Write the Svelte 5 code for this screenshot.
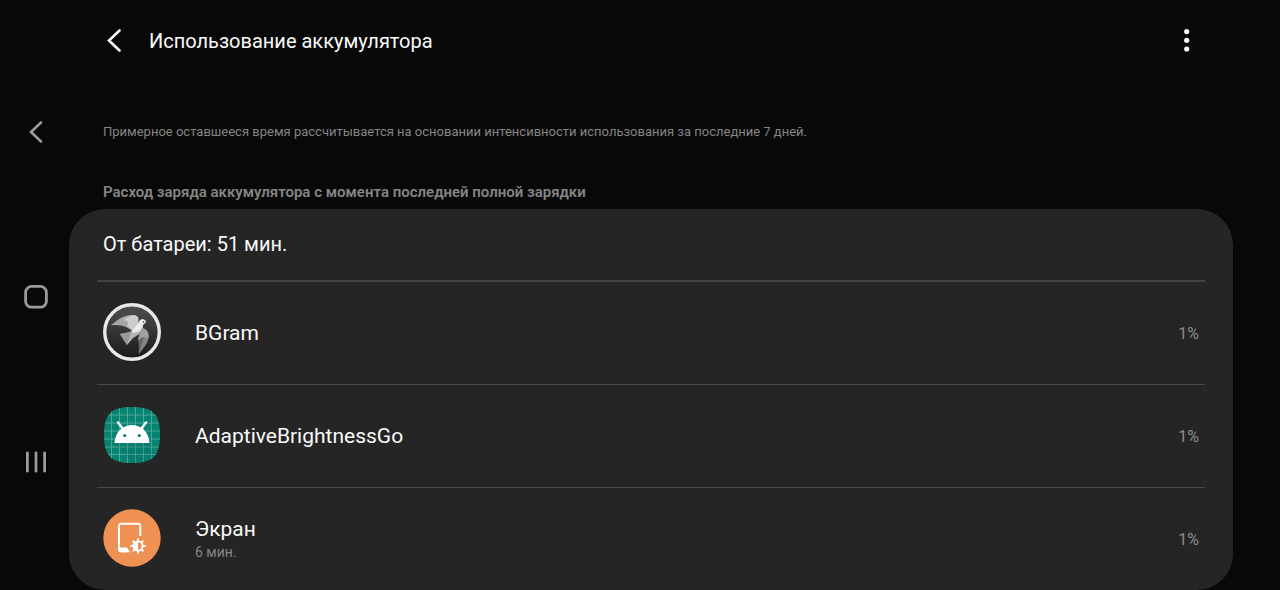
<script lang="ts">
    const apps = [
        { id: 'bgram', name: 'BGram', time: '', usage: 1 },
        { id: 'brightness', name: 'AdaptiveBrightnessGo', time: '', usage: 1 },
        { id: 'screen', name: 'Экран', time: '6 мин.', usage: 1 },
    ];
</script>

<style>
    :global(body) {
        margin: 0;
        background: #080808;
    }

    .screen {
        display: flex;
        min-height: 100vh;
        color: #fafafa;
        font-family: Roboto, "Noto Sans", sans-serif;
    }

    button {
        display: flex;
        align-items: center;
        justify-content: center;
        padding: 0;
        border: none;
        background: transparent;
        color: inherit;
        font: inherit;
        cursor: pointer;
    }

    svg {
        display: block;
    }

    .nav-bar {
        display: flex;
        flex-direction: column;
        justify-content: space-between;
        flex: none;
        width: 69px;
        box-sizing: border-box;
        padding: 108px 0 104px 12px;
        color: #9a9a9a;
    }

    .nav-bar button {
        width: 48px;
        height: 48px;
    }

    main {
        flex: 1;
        min-width: 0;
        margin-right: 47px;
    }

    header {
        display: flex;
        align-items: center;
        height: 82px;
        padding: 0 34px 0 33px;
    }

    header button {
        width: 24px;
        height: 48px;
    }

    h1 {
        flex: 1;
        margin: 0 0 0 23px;
        font-size: 20px;
        line-height: 32px;
        font-weight: 400;
    }

    .note {
        margin: 40px 34px 0;
        font-size: 13px;
        line-height: 20px;
        color: #858585;
    }

    h2 {
        margin: 40px 34px 7px;
        font-size: 15px;
        line-height: 20px;
        font-weight: 600;
        color: #858585;
    }

    .card {
        padding: 0 28px;
        border-radius: 36px;
        background: #252525;
    }

    .summary {
        margin: 0;
        padding: 0 6px;
        font-size: 20px;
        line-height: 71px;
    }

    ul {
        margin: 0;
        padding: 0;
        list-style: none;
    }

    li {
        border-top: 1px solid #484848;
    }

    li:first-child {
        border-top: 2px solid #434343;
    }

    .app {
        width: 100%;
        height: 102px;
        padding: 0 6px;
        text-align: left;
    }

    .app svg {
        margin-bottom: 2px;
    }

    .app-text {
        display: flex;
        flex-direction: column;
        flex: 1;
        margin-left: 34px;
    }

    .name {
        font-size: 21px;
        line-height: 26px;
    }

    .time {
        font-size: 14px;
        line-height: 20px;
        color: #858585;
    }

    .usage {
        font-size: 16px;
        color: #8c8c8c;
    }
</style>

<div class="screen">
    <nav class="nav-bar" aria-label="Навигация">
        <button aria-label="Назад">
            <svg width="24" height="24" viewBox="0 0 24 24" fill="none" stroke="currentColor" stroke-width="2.6" stroke-linecap="round">
                <path d="M17 2.5 7 12l10 9.5" />
            </svg>
        </button>
        <button aria-label="Главный экран">
            <svg width="24" height="24" viewBox="0 0 24 24" fill="none" stroke="currentColor" stroke-width="2.8">
                <rect x="1.6" y="1.4" width="20.8" height="20.8" rx="6" />
            </svg>
        </button>
        <button aria-label="Недавние приложения">
            <svg width="24" height="24" viewBox="0 0 24 24" stroke="currentColor" stroke-width="2.8" stroke-linecap="round">
                <path d="M3.4 2.8v18.4M12 2.8v18.4M20.6 2.8v18.4" />
            </svg>
        </button>
    </nav>

    <main>
        <header>
            <button aria-label="Назад">
                <svg width="24" height="24" viewBox="0 0 24 24" fill="none" stroke="currentColor" stroke-width="2.6" stroke-linecap="round">
                    <path d="M17.5 1.5 7 11.5l10.5 10" />
                </svg>
            </button>
            <h1>Использование аккумулятора</h1>
            <button aria-label="Дополнительно">
                <svg width="24" height="24" viewBox="0 0 24 24" fill="currentColor">
                    <circle cx="11.7" cy="2.6" r="2.6" />
                    <circle cx="11.7" cy="11.3" r="2.6" />
                    <circle cx="11.7" cy="20" r="2.6" />
                </svg>
            </button>
        </header>

        <p class="note">Примерное оставшееся время рассчитывается на основании интенсивности использования за последние 7 дней.</p>

        <h2>Расход заряда аккумулятора с момента последней полной зарядки</h2>
        <section class="card">
            <p class="summary">От батареи: 51 мин.</p>
            <ul>
                {#each apps as app (app.id)}
                    <li>
                        <button class="app">
                            {#if app.id === 'bgram'}
                                <svg width="58" height="58" viewBox="0 0 58 58">
                                    <defs>
                                        <linearGradient id="disc" x1="0" y1="0" x2="0" y2="1">
                                            <stop offset="0" stop-color="#505052" />
                                            <stop offset="1" stop-color="#19191a" />
                                        </linearGradient>
                                    </defs>
                                    <circle cx="29" cy="29" r="27.3" fill="url(#disc)" stroke="#e9e9e9" stroke-width="3.4" />
                                    <path d="M8 22C14 18 19 12 29 12c6 0 8 3 6 8l-5 8-7-4c-5-2-10-2-15-2z" fill="#a6a6a6" />
                                    <path d="M21 17c5-5 11-6 14-3v6l-6 7-5-4c2-3 1-5-3-6z" fill="#cdcdcd" />
                                    <path d="M17 31 27 29 36 19c2-4 6-3 7 0l-3 3c0 8-5 10-10 13l-6 7z" fill="#b4b4b4" />
                                    <path d="M29 27 36 19c2-4 6-3 7 0l-3 3c-1 6-5 7-10 8z" fill="#ebebeb" />
                                    <path d="M17 31 28 29l-4 13z" fill="#999" />
                                    <path d="M39 25c5 1 8 6 6 12-1 4-4 7-9 14 0-6 1-10-1-15z" fill="#858587" />
                                    <path d="M39 25c5 1 8 5 6 11l-4-2-6 2z" fill="#a0a0a0" />
                                    <path d="M35 37 41 34l-5 17c-1-4 1-9-1-14z" fill="#68686a" />
                                    <circle cx="40.5" cy="19" r=".8" fill="#333" />
                                </svg>
                            {:else if app.id === 'brightness'}
                                <svg width="58" height="58" viewBox="0 0 58 58">
                                    <defs>
                                        <clipPath id="tile">
                                            <path d="M29 1C50 1 57 8 57 29S50 57 29 57 1 50 1 29 8 1 29 1z" />
                                        </clipPath>
                                    </defs>
                                    <g clip-path="url(#tile)">
                                        <path d="M0 0h58v58H0z" fill="#078371" />
                                        <path d="M8.5 0v58M16.5 0v58M24.5 0v58M32.5 0v58M40.5 0v58M48.5 0v58M0 9h58M0 17h58M0 25h58M0 33h58M0 41h58M0 48.5h58" stroke="#55aa9d" stroke-width=".9" />
                                        <path d="M12 37h34l8 20H29z" fill="#056b5d" opacity=".2" />
                                    </g>
                                    <path d="m15 16.500 5 6.500M43 16.500l-5 6.500" stroke="#fff" stroke-width="2.4" stroke-linecap="round" />
                                    <path d="M11.5 37C13 13 45 13 46.500 37z" fill="#fff" />
                                    <circle cx="21.7" cy="29.5" r="1.6" fill="#078371" />
                                    <circle cx="36.3" cy="29.5" r="1.6" fill="#078371" />
                                </svg>
                            {:else}
                                <svg width="58" height="58" viewBox="0 0 58 58">
                                    <circle cx="29" cy="29" r="28.7" fill="#ef9153" />
                                    <path d="M37.3 27V17c0-1.5-1-2.3-2.3-2.3H18.3c-1.3 0-2.3.8-2.3 2.3v23c0 1.5 1 2.3 2.3 2.3H24" fill="none" stroke="#fff" stroke-width="2" />
                                    <path d="M16 38.500h8l3 4.800h-9c-1.400 0-2-.8-2-2z" fill="#fff" />
                                    <circle cx="35" cy="37" r="4.6" fill="none" stroke="#fff" stroke-width="1.8" />
                                    <path d="M35 32a5 5 0 0 0 0 10z" fill="#fff" />
                                    <path d="M35 30v2M35 42v2M28 37h2M40 37h2M30.1 32.1l1.400 1.400M38.500 40.500l1.400 1.400M30.100 41.900l1.400-1.400M38.500 33.500l1.400-1.400" stroke="#fff" stroke-width="1.8" stroke-linecap="round" />
                                </svg>
                            {/if}
                            <span class="app-text">
                                <span class="name">{app.name}</span>
                                {#if app.time}
                                    <span class="time">{app.time}</span>
                                {/if}
                            </span>
                            <span class="usage">{app.usage}%</span>
                        </button>
                    </li>
                {/each}
            </ul>
        </section>
    </main>
</div>
